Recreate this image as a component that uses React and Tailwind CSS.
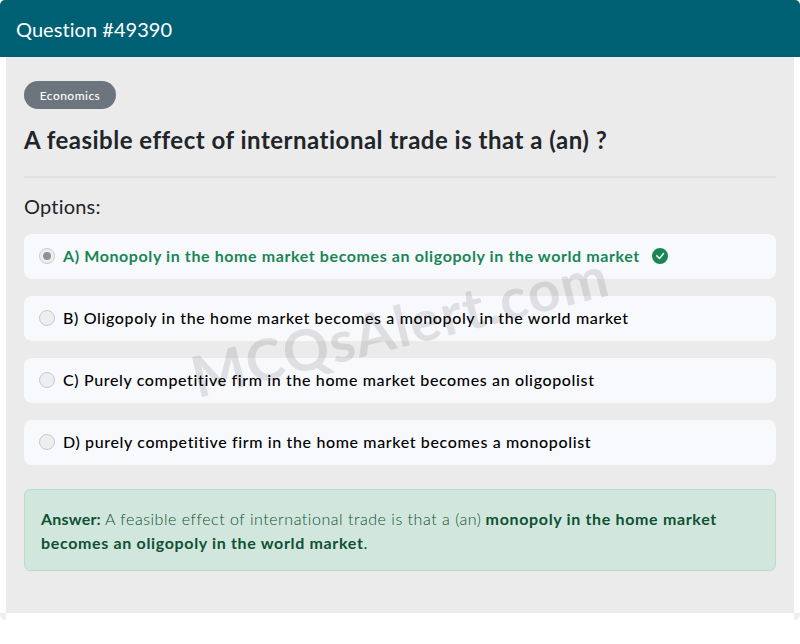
import React from 'react';

const options = [
  { label: 'A) Monopoly in the home market becomes an oligopoly in the world market', correct: true },
  { label: 'B) Oligopoly in the home market becomes a monopoly in the world market' },
  { label: 'C) Purely competitive firm in the home market becomes an oligopolist' },
  { label: 'D) purely competitive firm in the home market becomes a monopolist' },
];

const Radio = ({ checked }) => (
  <span className="w-4 h-4 shrink-0 rounded-full border border-[#c9c9c9] bg-[#eceef0] flex items-center justify-center">
    {checked && <span className="w-2 h-2 rounded-full bg-[#8f9194]"></span>}
  </span>
);

const App = () => {
  return (
    <div className="relative w-[800px] h-[644px] bg-white overflow-hidden font-['Lato','Noto_Sans',sans-serif]">
      <header className="h-[57px] bg-[#006073] rounded-t-[5px] px-4 flex items-center">
        <h2 className="text-white text-[20px] tracking-[0.05px]">Question #49390</h2>
      </header>

      <main className="relative mx-1.5 h-[556px] bg-[#ebebeb] px-[18px] pt-6">
        <span className="inline-flex h-7 w-[92px] pt-px items-center justify-center rounded-full bg-[#6c757d] text-white text-[12px] font-medium tracking-[0.45px]">Economics</span>
        <h1 className="mt-[15px] text-[24px] leading-[32px] font-bold text-[#212529] tracking-[0.5px]">A feasible effect of international trade is that a (an) ?</h1>
        <hr className="mt-5 border-t-2 border-[#e0e0e0]" />
        <h3 className="mt-[14px] text-[20px] leading-[28px] text-[#212529] tracking-[0.2px]">Options:</h3>

        <div className="mt-[14px] flex flex-col gap-[17px]">
          {options.map((opt) => (
            <div key={opt.label} className="h-[45px] rounded-lg bg-[#f8f9fd] pl-[15px] pb-0.5 flex items-center">
              <Radio checked={opt.correct} />
              <span className={`ml-2 text-[16px] ${opt.correct ? 'text-[#198754] font-bold tracking-[0.6px]' : 'text-black font-medium tracking-[0.63px]'}`}>{opt.label}</span>
              {opt.correct && (
                <svg className="ml-3 w-4 h-4 text-[#198754]" viewBox="0 0 16 16" fill="currentColor">
                  <path d="M16 8A8 8 0 1 1 0 8a8 8 0 0 1 16 0zm-3.97-3.03a.75.75 0 0 0-1.08.02L7.477 9.417 5.384 7.323a.75.75 0 0 0-1.06 1.06L6.97 11.03a.75.75 0 0 0 1.079-.02l3.992-4.99a.75.75 0 0 0-.01-1.05z" />
                </svg>
              )}
            </div>
          ))}
        </div>

        <div className="mt-6 h-[82px] rounded-md border border-[#badbcc] bg-[#d1e7dd] px-4 pt-[17px] text-[16px] leading-[24px] text-[#0f5132]">
          <strong className="font-bold tracking-[0.2px]">Answer:</strong> <span className="font-light tracking-[0.53px]">A feasible effect of international trade is that a (an)</span> <strong className="font-bold tracking-[0.66px]">monopoly in the home market becomes an oligopoly in the world market</strong>.
        </div>

        {/* watermark over the options */}
        <div className="absolute left-[180px] top-[240px] -rotate-[14deg] origin-center text-[57px] leading-none font-bold text-black/10 tracking-[1.5px] whitespace-nowrap pointer-events-none">MCQsAlert.com</div>
      </main>

      {/* little corners left under the card */}
      <div className="absolute left-0 top-[613px] w-1.5 h-[7px] bg-[#efefef] rounded-bl-full"></div>
      <div className="absolute right-0 top-[613px] w-1.5 h-[7px] bg-[#efefef] rounded-br-full"></div>
    </div>
  );
};

export default App;
